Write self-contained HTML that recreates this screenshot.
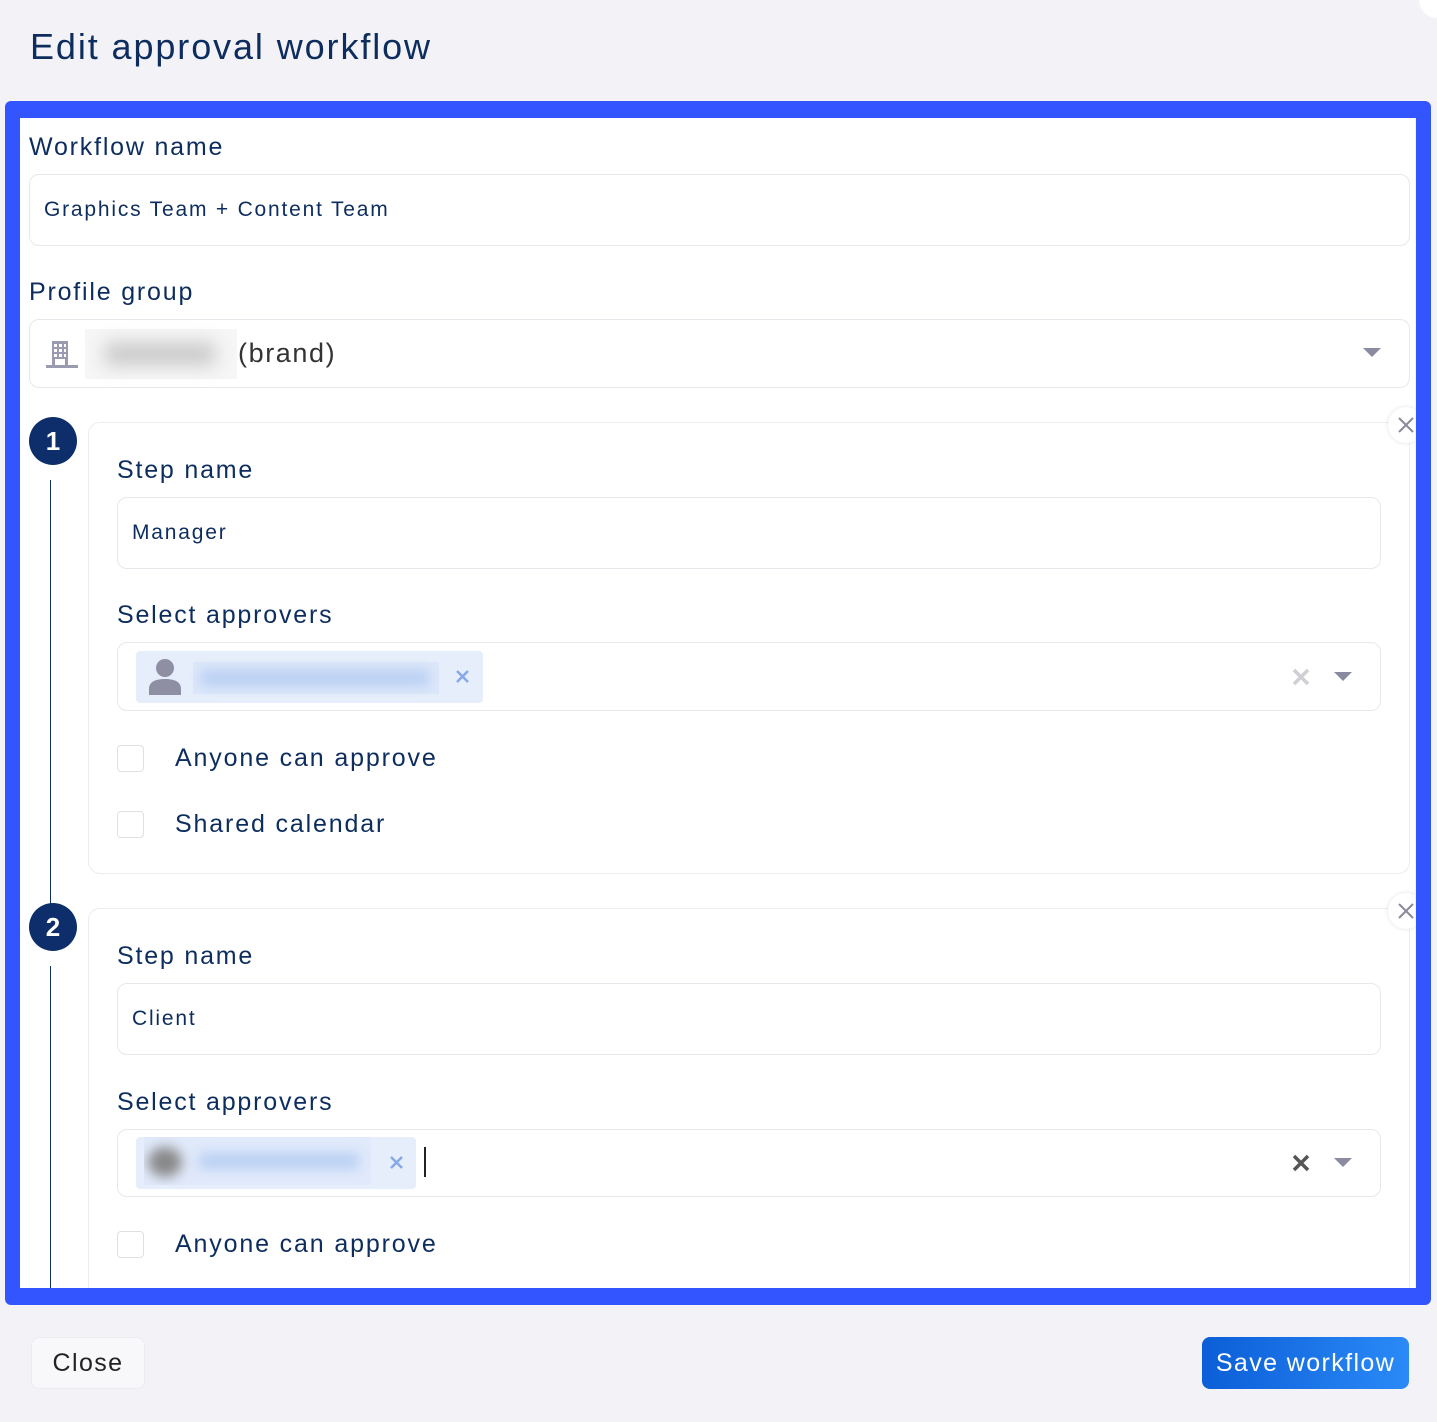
<!DOCTYPE html>
<html><head><meta charset="utf-8">
<style>
*{box-sizing:border-box;margin:0;padding:0}
html,body{width:1437px;height:1422px;overflow:hidden;background:#f3f3f7;font-family:"Liberation Sans",sans-serif;color:#0d2d5e}
.a{position:absolute}
.lbl{position:absolute;font-size:25px;color:#0d2d5e;line-height:30px;letter-spacing:1.8px}
.inp{position:absolute;background:#fff;border:1px solid #e7e8ee;border-radius:10px}
.cb{position:absolute;width:27px;height:27px;border:1px solid #dfe0e6;border-radius:4px;background:#fff}
.cbt{position:absolute;font-size:25px;line-height:30px;color:#0d2d5e;letter-spacing:1.85px}
.it{position:absolute;font-size:21px;line-height:26px;letter-spacing:1.8px}
.circ{position:absolute;width:48px;height:48px;border-radius:50%;background:#0d2d6b;color:#fff;font-size:26px;font-weight:bold;text-align:center;line-height:48px}
.card{position:absolute;background:#fff;border:1px solid #ececf1;border-radius:12px}
.xc{position:absolute;width:36px;height:36px;border-radius:50%;background:#fff;box-shadow:0 0 4px rgba(0,0,0,.12)}
</style></head><body>
<div class="a" style="left:30px;top:25px;font-size:36px;line-height:44px;color:#0d2d5e;letter-spacing:1.9px">Edit approval workflow</div>
<div class="a" style="left:1419px;top:-18px;width:36px;height:36px;border-radius:50%;background:#fff"></div>

<div class="a" style="left:20px;top:118px;width:1395px;height:1170px;background:#fff;overflow:hidden">
 <div style="position:absolute;left:-20px;top:-118px;width:1437px;height:1422px">
  <div class="lbl" style="left:29px;top:132px">Workflow name</div>
  <div class="inp" style="left:29px;top:174px;width:1381px;height:72px"></div>
  <div class="it" style="left:44px;top:197px">Graphics Team + Content Team</div>
  <div class="lbl" style="left:29px;top:277px">Profile group</div>
  <div class="inp" style="left:29px;top:319px;width:1381px;height:69px"></div>
  <svg class="a" style="left:45px;top:338px" width="34" height="32" viewBox="0 0 34 32"><rect x="7" y="3" width="16" height="24" fill="#9a9ab0"/><g fill="#fff"><rect x="9" y="6" width="3" height="3"/><rect x="14" y="6" width="3" height="3"/><rect x="19" y="6" width="2" height="3"/><rect x="9" y="11" width="3" height="3"/><rect x="14" y="11" width="3" height="3"/><rect x="19" y="11" width="2" height="3"/><rect x="9" y="16" width="3" height="3"/><rect x="14" y="16" width="3" height="3"/><rect x="19" y="16" width="2" height="3"/><rect x="10" y="21" width="10" height="6"/></g><rect x="1" y="27" width="32" height="3" fill="#9a9ab0"/></svg>
  <div class="a" style="left:85px;top:329px;width:152px;height:50px;background:#f6f6f6"><div style="position:absolute;left:20px;top:14px;width:110px;height:22px;background:#c8c8c8;filter:blur(9px)"></div></div>
  <div class="a" style="left:238px;top:337px;font-size:27px;line-height:32px;color:#333;letter-spacing:1.6px">(brand)</div>
  <svg class="a" style="left:1363px;top:348px" width="18" height="10"><path d="M0 0H18L9 9Z" fill="#8a8aa0"/></svg>

  <div class="circ" style="left:29px;top:417px">1</div>
  <div class="a" style="left:50px;top:480px;width:1px;height:425px;background:#0d2d5e"></div>
  <div class="card" style="left:88px;top:422px;width:1322px;height:452px"></div>
  <div class="xc" style="left:1388px;top:407px"></div>
  <svg class="a" style="left:1398px;top:417px" width="16" height="16"><path d="M1 1L15 15M15 1L1 15" stroke="#8a8a98" stroke-width="2"/></svg>
  <div class="lbl" style="left:117px;top:455px">Step name</div>
  <div class="inp" style="left:117px;top:497px;width:1264px;height:72px"></div>
  <div class="it" style="left:132px;top:520px">Manager</div>
  <div class="lbl" style="left:117px;top:600px">Select approvers</div>
  <div class="inp" style="left:117px;top:642px;width:1264px;height:69px"></div>
  <div class="a" style="left:136px;top:651px;width:347px;height:52px;background:#e7eefb;border-radius:4px"></div>
  <svg class="a" style="left:147px;top:657px" width="36" height="38"><circle cx="18" cy="11" r="9" fill="#8f8fa3"/><path d="M2 38V32C2 25 8 22 18 22S34 25 34 32V38Z" fill="#8f8fa3"/></svg>
  <div class="a" style="left:193px;top:662px;width:246px;height:32px;background:#dce7fa"><div style="position:absolute;left:8px;top:8px;width:228px;height:16px;background:#b9cff3;filter:blur(6px)"></div></div>
  <svg class="a" style="left:456px;top:670px" width="13" height="13"><path d="M1 1L12 12M12 1L1 12" stroke="#86a8e8" stroke-width="2.5"/></svg>
  <svg class="a" style="left:1292px;top:668px" width="18" height="18"><path d="M2 2L16 16M16 2L2 16" stroke="#cfcfd4" stroke-width="3.5"/></svg>
  <svg class="a" style="left:1334px;top:672px" width="18" height="10"><path d="M0 0H18L9 9Z" fill="#8a8aa0"/></svg>
  <div class="cb" style="left:117px;top:745px"></div>
  <div class="cbt" style="left:175px;top:743px">Anyone can approve</div>
  <div class="cb" style="left:117px;top:811px"></div>
  <div class="cbt" style="left:175px;top:809px">Shared calendar</div>

  <div class="circ" style="left:29px;top:903px">2</div>
  <div class="a" style="left:50px;top:966px;width:1px;height:400px;background:#0d2d5e"></div>
  <div class="card" style="left:88px;top:908px;width:1322px;height:452px"></div>
  <div class="xc" style="left:1388px;top:893px"></div>
  <svg class="a" style="left:1398px;top:903px" width="16" height="16"><path d="M1 1L15 15M15 1L1 15" stroke="#8a8a98" stroke-width="2"/></svg>
  <div class="lbl" style="left:117px;top:941px">Step name</div>
  <div class="inp" style="left:117px;top:983px;width:1264px;height:72px"></div>
  <div class="it" style="left:132px;top:1006px">Client</div>
  <div class="lbl" style="left:117px;top:1087px">Select approvers</div>
  <div class="inp" style="left:117px;top:1129px;width:1264px;height:68px"></div>
  <div class="a" style="left:136px;top:1137px;width:280px;height:52px;background:#e7eefb;border-radius:4px"></div>
  <div class="a" style="left:144px;top:1137px;width:227px;height:48px;background:#e1eafb;overflow:hidden"><div style="position:absolute;left:4px;top:10px;width:34px;height:30px;border-radius:50%;background:#888;filter:blur(6px)"></div><div style="position:absolute;left:55px;top:16px;width:160px;height:16px;background:#b9cff3;filter:blur(6px)"></div></div>
  <svg class="a" style="left:390px;top:1156px" width="13" height="13"><path d="M1 1L12 12M12 1L1 12" stroke="#86a8e8" stroke-width="2.5"/></svg>
  <div class="a" style="left:424px;top:1147px;width:2px;height:30px;background:#222"></div>
  <svg class="a" style="left:1292px;top:1154px" width="18" height="18"><path d="M2 2L16 16M16 2L2 16" stroke="#555" stroke-width="3.5"/></svg>
  <svg class="a" style="left:1334px;top:1158px" width="18" height="10"><path d="M0 0H18L9 9Z" fill="#8a8aa0"/></svg>
  <div class="cb" style="left:117px;top:1231px"></div>
  <div class="cbt" style="left:175px;top:1229px">Anyone can approve</div>
 </div>
</div>

<div class="a" style="left:5px;top:101px;width:1426px;height:1204px;border:15px solid #3355ff;border-top-width:17px;border-bottom-width:17px;border-radius:6px"></div>

<div class="a" style="left:31px;top:1337px;width:114px;height:52px;background:#f8f8fa;border:1px solid #ebebf0;border-radius:8px;font-size:25px;line-height:50px;text-align:center;color:#222;letter-spacing:1.4px">Close</div>
<div class="a" style="left:1202px;top:1337px;width:207px;height:52px;background:linear-gradient(90deg,#0b5ed7,#2b8af7);border-radius:8px;font-size:25px;line-height:52px;text-align:center;color:#fff;letter-spacing:1.4px">Save workflow</div>
</body></html>
